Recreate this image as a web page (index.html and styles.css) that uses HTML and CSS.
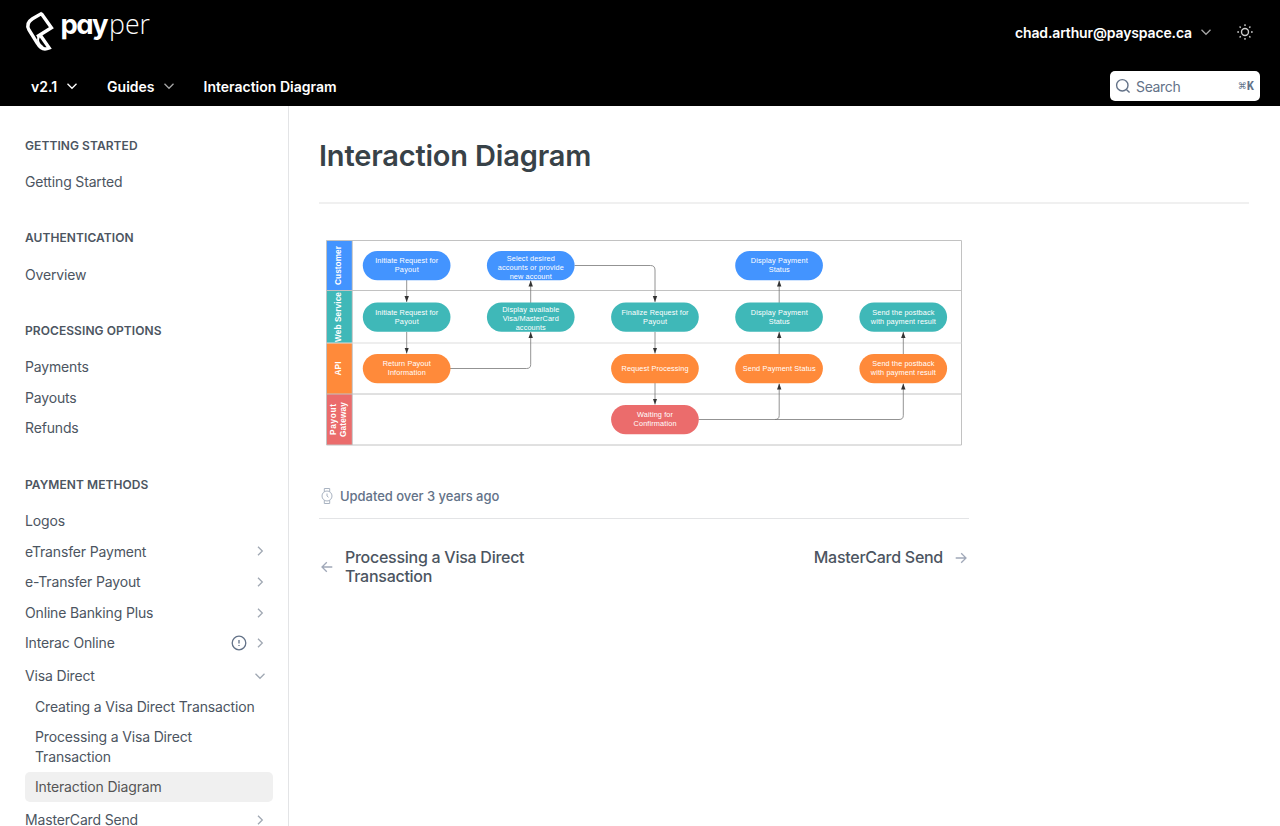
FILE: index.html
```html
<!DOCTYPE html>
<html lang="en">
<head>
<meta charset="utf-8">
<title>Interaction Diagram</title>
<link rel="stylesheet" href="styles.css">
</head>
<body>
<svg class="defs" width="0" height="0">
  <symbol id="down" viewBox="0 0 12 12"><path d="M1.500 3.800 6 8.300l4.500-4.500"/></symbol>
  <symbol id="right" viewBox="0 0 12 12"><path d="M4 1.700 8.300 6 4 10.300"/></symbol>
</svg>
<header class="header">
  <div class="top">
    <svg class="logo" width="130" height="58" viewBox="22 2 130 58">
      <path class="mark" d="M41.300 13.600 51.400 27.800 37 36.800 M42.200 13.100 32.500 18.800C27.500 22 26.500 25.500 29 30L37.500 43.500C40 48 44 50.300 49.200 48L40.500 35.500"/>
      <path class="mark blade" d="M38.800 36.500C37.200 40 38.500 44.500 43 47.500"/>
      <text class="pay" x="60.500" y="33.500" textLength="48">pay</text>
      <text class="per" x="109" y="33.500" textLength="41" lengthAdjust="spacingAndGlyphs">per</text>
    </svg>
    <div class="user"><span>chad.arthur@payspace.ca</span><svg class="chev dim" width="12" height="12"><use href="#down"/></svg></div>
    <svg class="sun" width="18" height="18" viewBox="0 0 18 18"><circle cx="9" cy="9" r="3.500"/><path d="M9 1.300v1.700M9 15v1.700M1.300 9H3M15 9h1.700M3.600 3.600l1.100 1.100M13.300 13.300l1.100 1.100M14.400 3.600l-1.100 1.100M4.700 13.300l-1.100 1.100"/></svg>
  </div>
  <nav class="nav">
    <a class="version">v2.1 <svg class="chev" width="12" height="12"><use href="#down"/></svg></a>
    <a class="guides">Guides <svg class="chev dim" width="12" height="12"><use href="#down"/></svg></a>
    <a class="current">Interaction Diagram</a>
    <div class="search">
      <svg width="16" height="16" viewBox="0 0 16 16"><circle cx="7.300" cy="7.300" r="5.700"/><path d="m11.400 11.400 3.200 3.200"/></svg>
      <span>Search</span><kbd>⌘<b>K</b></kbd>
    </div>
  </nav>
</header>
<div class="body">
  <aside class="sidebar">
    <h2>Getting Started</h2>
    <a class="item">Getting Started</a>
    <h2>Authentication</h2>
    <a class="item">Overview</a>
    <h2>Processing Options</h2>
    <a class="item">Payments</a>
    <a class="item">Payouts</a>
    <a class="item">Refunds</a>
    <h2>Payment Methods</h2>
    <a class="item">Logos</a>
    <a class="item">eTransfer Payment<svg class="caret" width="12" height="12"><use href="#right"/></svg></a>
    <a class="item">e-Transfer Payout<svg class="caret" width="12" height="12"><use href="#right"/></svg></a>
    <a class="item">Online Banking Plus<svg class="caret" width="12" height="12"><use href="#right"/></svg></a>
    <a class="item">Interac Online<svg class="alert" width="16" height="16" viewBox="0 0 16 16"><circle cx="8" cy="8" r="6.800"/><path d="M8 5v3.400M8 10v1"/></svg><svg class="caret" width="12" height="12"><use href="#right"/></svg></a>
    <div class="group">
      <a class="item">Visa Direct<svg class="caret" width="12" height="12"><use href="#down"/></svg></a>
      <a class="item sub">Creating a Visa Direct Transaction</a>
      <a class="item sub">Processing a Visa Direct<br>Transaction</a>
      <a class="item sub active">Interaction Diagram</a>
    </div>
    <a class="item">MasterCard Send<svg class="caret" width="12" height="12"><use href="#right"/></svg></a>
  </aside>
  <main class="main">
    <h1>Interaction Diagram</h1>
    <article class="content">
      <svg class="diagram" width="638" height="208" viewBox="325 239 638 208">
        <defs>
          <marker id="arrow" markerUnits="userSpaceOnUse" markerWidth="6" markerHeight="7" refX="6" refY="2.500" orient="auto"><path d="M0 .3 6 2.500 0 4.700z"/></marker>
        </defs>
        <g class="lanes">
          <path fill="#4394ff" d="M326.500 240.500H352V290.500H326.500z"/>
          <path fill="#3fb8b8" d="M326.500 290.500H352V343H326.500z"/>
          <path fill="#ff8a3a" d="M326.500 343H352V394H326.500z"/>
          <path fill="#eb6c6c" d="M326.500 394H352V445H326.500z"/>
          <path class="grid" d="M326.500 240.500H961.500V445H326.500zM326.500 290.500H961.500M326.500 394H961.500M352.300 240.500V445"/>
          <path class="grid light" d="M326.500 343H961.500"/>
        </g>
        <g class="lane-names">
          <text transform="translate(341.300 265.500) rotate(-90)" textLength="39">Customer</text>
          <text transform="translate(341.300 317) rotate(-90)" textLength="50">Web Service</text>
          <text transform="translate(341.300 368.500) rotate(-90)" textLength="14">API</text>
          <text transform="translate(336.300 419.500) rotate(-90)" textLength="31">Payout</text>
          <text transform="translate(346.300 419.500) rotate(-90)" textLength="35">Gateway</text>
        </g>
        <g class="links">
          <path d="M406.700 280V302"/><path d="M406.700 332V353.500"/>
          <path d="M450 368.500H526.500Q530.700 368.500 530.700 364.500V332"/><path d="M530.700 303V280.500"/>
          <path d="M574.500 265.500H650.500Q655 265.500 655 270V302"/><path d="M655 332V353.500"/><path d="M655 383V404.500"/>
          <path d="M698.500 419.500H775Q779.200 419.500 779.200 415.500V383.500"/><path d="M779.200 354V332"/><path d="M779.200 303V280.500"/>
          <path d="M775 419.500H899Q903.300 419.500 903.300 415.500V383.500"/><path d="M903.300 354V332"/>
        </g>
        <g fill="#4394ff"><rect x="362.800" y="251" width="87.700" height="29.200" rx="14.600"/><rect x="486.900" y="251" width="87.700" height="29.200" rx="14.600"/><rect x="735.200" y="251" width="87.700" height="29.200" rx="14.600"/></g>
        <g fill="#3fb8b8"><rect x="362.800" y="302.500" width="87.700" height="29.200" rx="14.600"/><rect x="486.900" y="302.500" width="87.700" height="29.200" rx="14.600"/><rect x="611.100" y="302.500" width="87.700" height="29.200" rx="14.600"/><rect x="735.200" y="302.500" width="87.700" height="29.200" rx="14.600"/><rect x="859.400" y="302.500" width="87.700" height="29.200" rx="14.600"/></g>
        <g fill="#ff8a3a"><rect x="362.800" y="354" width="87.700" height="29.200" rx="14.600"/><rect x="611.100" y="354" width="87.700" height="29.200" rx="14.600"/><rect x="735.200" y="354" width="87.700" height="29.200" rx="14.600"/><rect x="859.400" y="354" width="87.700" height="29.200" rx="14.600"/></g>
        <rect fill="#eb6c6c" x="611.100" y="405" width="87.700" height="29.200" rx="14.600"/>
        <g class="labels">
          <text x="406.700" y="263" textLength="63">Initiate Request for</text><text x="406.700" y="272" textLength="24">Payout</text>
          <text x="530.700" y="260.500" textLength="48">Select desired</text><text x="530.700" y="269.500" textLength="66">accounts or provide</text><text x="530.700" y="278.500" textLength="42">new account</text>
          <text x="779.200" y="263" textLength="57">Display Payment</text><text x="779.200" y="272" textLength="21">Status</text>
          <text x="406.700" y="314.500" textLength="63">Initiate Request for</text><text x="406.700" y="323.500" textLength="24">Payout</text>
          <text x="530.700" y="312" textLength="57">Display available</text><text x="530.700" y="321" textLength="56">Visa/MasterCard</text><text x="530.700" y="330" textLength="30">accounts</text>
          <text x="655" y="314.500" textLength="67">Finalize Request for</text><text x="655" y="323.500" textLength="24">Payout</text>
          <text x="779.200" y="314.500" textLength="57">Display Payment</text><text x="779.200" y="323.500" textLength="21">Status</text>
          <text x="903.300" y="314.500" textLength="62">Send the postback</text><text x="903.300" y="323.500" textLength="65">with payment result</text>
          <text x="406.700" y="366" textLength="48">Return Payout</text><text x="406.700" y="375" textLength="38">Information</text>
          <text x="655" y="370.500" textLength="67">Request Processing</text>
          <text x="779.200" y="370.500" textLength="73">Send Payment Status</text>
          <text x="903.300" y="366" textLength="62">Send the postback</text><text x="903.300" y="375" textLength="65">with payment result</text>
          <text x="655" y="417" textLength="36">Waiting for</text><text x="655" y="426" textLength="43">Confirmation</text>
        </g>
      </svg>
      <div class="updated"><svg width="16" height="18" viewBox="0 0 16 18"><circle cx="8" cy="9" r="5"/><path d="M5.300 4.800V1.500h5.400v3.300M5.300 13.200v3.300h5.400v-3.300M8 6.500V9l1.500 1.300"/></svg>Updated over 3 years ago</div>
      <div class="pager">
        <a class="prev"><svg width="14" height="14" viewBox="0 0 14 14"><path d="M12.300 7H2M6.800 2.200 2 7l4.800 4.800"/></svg><span>Processing a Visa Direct<br>Transaction</span></a>
        <a class="next"><span>MasterCard Send</span><svg width="14" height="14" viewBox="0 0 14 14"><path d="M1.700 7H12M7.200 2.200 12 7l-4.800 4.800"/></svg></a>
      </div>
    </article>
  </main>
</div>
</body>
</html>
```
FILE: styles.css
```css
* { box-sizing: border-box; }
body { margin: 0; height: 826px; overflow: hidden; font-family: Inter, "Liberation Sans", sans-serif; color: #4c5561; background: #fff; }
svg { fill: none; stroke: currentColor; flex: none; }
.defs { display: none; }
.header { height: 106px; background: #000; color: #fff; font-size: 14px; font-weight: 600; }
.top { display: flex; align-items: center; height: 66px; padding: 0 26px 2px 22px; }
.logo { margin-bottom: 2px; stroke: none; }
.mark { fill: none; stroke: #fff; stroke-width: 3.400; }
.blade { stroke-width: 2.200; }
.logo text { fill: #fff; }
.logo .pay { font-size: 27.500px; font-weight: 700; font-feature-settings: "cv11"; }
.logo .per { font-family: "Open Sans", sans-serif; font-size: 28px; font-weight: 300; }
.user { display: flex; align-items: center; margin-left: auto; gap: 8px; letter-spacing: -.14px; }
.chev { stroke-width: 1.300; }
.dim { opacity: .65; }
.sun { margin-left: 24px; stroke-width: 1.400; opacity: .8; }
.nav { display: flex; align-items: center; height: 40px; padding: 0 20px 0 31px; }
.nav a { display: flex; align-items: center; gap: 8px; }
.nav .version { gap: 9px; }
.guides { margin-left: 29px; }
.current { margin-left: 29px; }
.search { display: flex; align-items: center; width: 150px; height: 30px; margin-left: auto; padding: 0 6px 0 5px; border-radius: 5px; background: #fff; color: #637288; font-weight: 400; letter-spacing: -.35px; }
.search svg { margin-right: 5px; stroke-width: 1.400; }
.search kbd { display: flex; align-items: center; margin-left: auto; font: 9px/14px "DejaVu Sans", sans-serif; letter-spacing: 0; }
.search kbd b { padding-top: 2px; font: 700 12px/14px "Liberation Mono", monospace; }
.body { display: flex; height: 720px; }
.sidebar { width: 289px; padding: 31px 15px 0 25px; border-right: 1px solid #e3e4e6; overflow: hidden; }
.sidebar h2 { margin: 32.600px 0 13.300px; font-size: 12px; line-height: 17px; font-weight: 600; letter-spacing: .07px; text-transform: uppercase; }
.sidebar h2:first-child { margin-top: 0; }
.item { display: flex; align-items: center; min-height: 29.600px; margin-bottom: 1px; padding: 5px 7px 5px 0; font-size: 14px; line-height: 19.600px; letter-spacing: -.16px; }
.caret { margin-left: auto; color: #a0a8b3; stroke-width: 1.300; }
.alert { margin-left: auto; color: #637288; stroke-width: 1.300; }
.alert + .caret { margin-left: 7px; }
.group { padding: 2px 0; }
.sub { padding-left: 10px; }
.active { border-radius: 5px; background: #f0f0f0; color: #555; }
.main { width: 991px; padding: 27px 31px 0 30px; }
h1 { margin: 0; height: 71px; border-bottom: 2px solid #f0f0f0; color: #384248; font-size: 29px; line-height: 46px; font-weight: 600; letter-spacing: -.18px; }
.content { width: 650px; padding-top: 35px; }
.diagram { display: block; margin-left: 6px; stroke: none; }
.grid { stroke: #c2c2c2; }
.light { stroke: #ddd; }
.links path { stroke: #777; stroke-width: .8; marker-end: url(#arrow); }
#arrow path { fill: #333; stroke: none; }
.diagram text { fill: #fff; text-anchor: middle; font-family: "Liberation Sans", Arial, sans-serif; font-size: 7.300px; }
.diagram .lane-names text { font-size: 8.300px; font-weight: 700; }
.updated { display: flex; align-items: center; gap: 5px; height: 44px; margin-top: 28px; padding-bottom: 2px; border-bottom: 1px solid #e3e4e6; color: #637288; font-size: 13px; font-weight: 500; letter-spacing: -.04px; }
.updated svg { color: #a9b3c1; }
.pager { display: flex; justify-content: space-between; align-items: flex-start; padding-top: 29px; font-size: 16px; line-height: 19px; font-weight: 500; letter-spacing: -.27px; }
.pager a { display: flex; align-items: center; }
.pager svg { color: #a0a8b8; stroke-width: 1.300; }
.prev { gap: 11px; padding-left: 1px; }
.next { gap: 11px; padding-right: 1px; }
```
